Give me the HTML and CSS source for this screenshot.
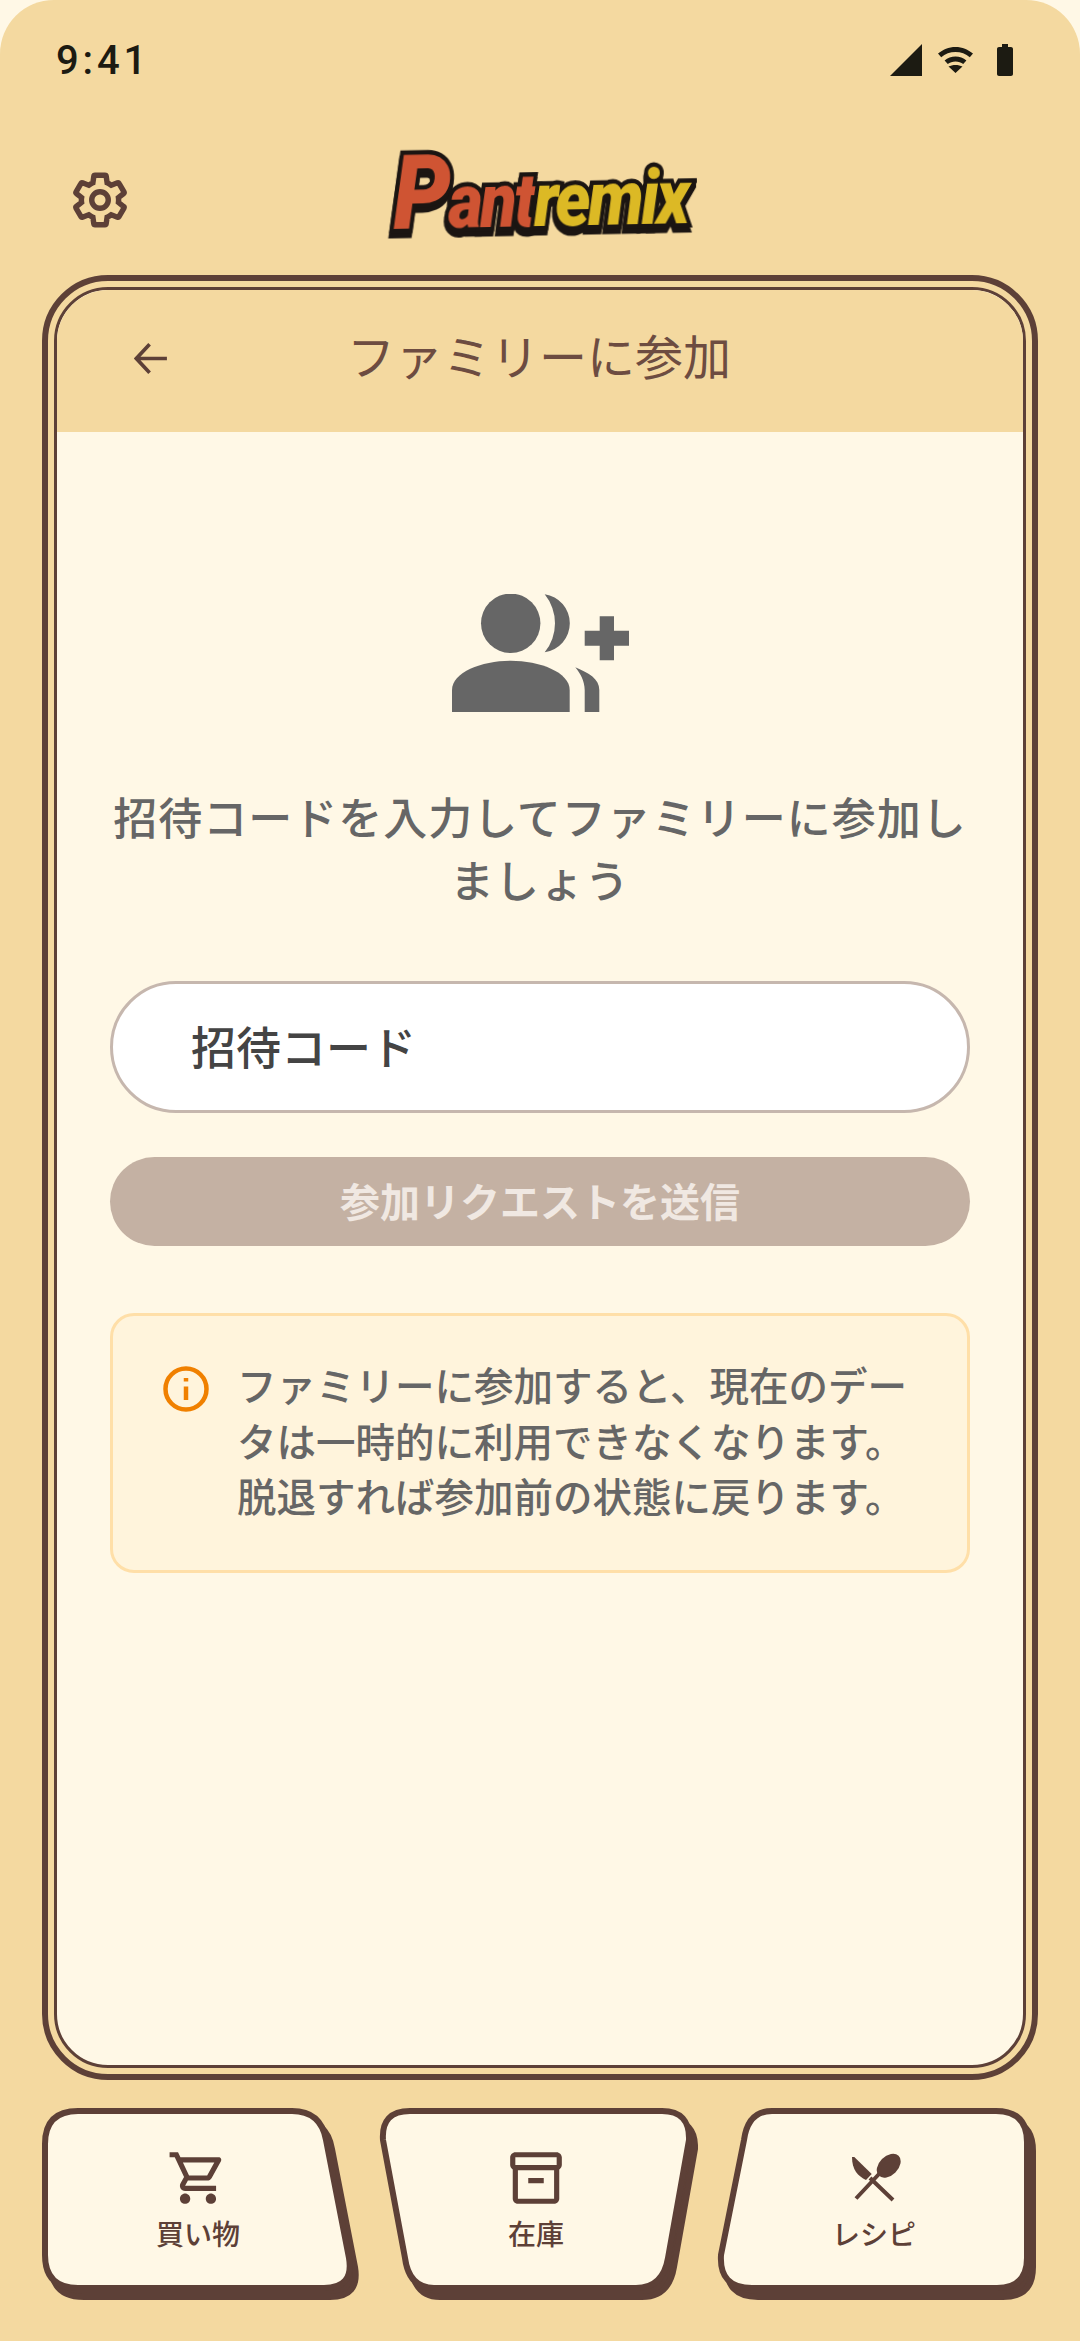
FILE: index.html
```html
<!DOCTYPE html>
<html lang="ja">
<head>
  <meta charset="UTF-8" />
  <meta name="viewport" content="width=device-width, initial-scale=1.0" />
  <title>ファミリーに参加</title>
  <link rel="stylesheet" href="styles.css">
</head>
<body>
  <div class="screen">
    <div class="status-bar">
      <span class="clock">9:41</span>
      <div class="status-icons">
        <svg class="icon-signal" viewBox="0 0 32 32"><path d="M32 0V32H0Z"/></svg>
        <svg class="icon-wifi" viewBox="0 0 35 26"><path d="M17.5 0C10.8 0 4.8 2.6 0 6.6l3.2 3.6c3.9-3.3 8.9-5.2 14.3-5.2s10.400 1.900 14.300 5.200L35 6.600C30.200 2.600 24.200 0 17.500 0zM17.500 9.500c-4.100 0-7.900 1.500-10.900 4l3.200 3.600c2-1.700 4.700-2.700 7.700-2.700s5.700 1 7.700 2.700l3.200-3.600c-3-2.500-6.800-4-10.900-4zM10.500 19.500l7 6.500 7-6.500c-2-1-4.500-1.600-7-1.600s-5 .6-7 1.600z"/></svg>
        <svg class="icon-battery" viewBox="0 0 16 32"><path d="M5 0H11V3H14C15.100 3 16 3.900 16 5V30C16 31.100 15.100 32 14 32H2C.9 32 0 31.100 0 30V5C0 3.900 .9 3 2 3H5Z"/></svg>
      </div>
    </div>

    <header class="app-bar">
      <button class="settings-btn" type="button">
        <svg viewBox="0 0 24 24"><path d="M19.140 12.940c.04-.3.06-.61.06-.94 0-.32-.02-.64-.07-.94l2.030-1.580c.18-.14.23-.41.12-.61l-1.920-3.320c-.12-.22-.37-.29-.59-.22l-2.390.96c-.5-.38-1.030-.7-1.620-.94l-.36-2.540c-.04-.24-.24-.41-.48-.41h-3.840c-.24 0-.43.17-.47.41l-.36 2.540c-.59.24-1.130.57-1.620.94l-2.390-.96c-.22-.08-.47 0-.59.22L2.740 8.870c-.12.21-.08.47.12.61l2.030 1.580c-.05.3-.09.63-.09.94s.02.64.07.94l-2.030 1.580c-.18.14-.23.41-.12.61l1.920 3.320c.12.22.37.29.59.22l2.390-.96c.5.38 1.030.7 1.620.94l.36 2.540c.05.24.24.41.48.41h3.840c.24 0 .44-.17.47-.41l.36-2.540c.59-.24 1.130-.56 1.620-.94l2.390.96c.22.08.47 0 .59-.22l1.920-3.320c.12-.22.07-.47-.12-.61l-2.010-1.580zM12 15.200c-1.760 0-3.200-1.440-3.200-3.200s1.440-3.200 3.200-3.200 3.200 1.440 3.200 3.200-1.440 3.200-3.200 3.200z"/></svg>
      </button>
      <div class="logo"><span class="logo-cap">P</span><span class="logo-red">ant</span><span class="logo-yellow">remix</span></div>
    </header>

    <main class="panel">
      <div class="panel-inner">
        <div class="panel-head">
          <svg class="back-arrow" viewBox="0 0 36 34"><path d="M36 17H3M17 1.500L2.500 17 17 32.500"/></svg>
          <h1>ファミリーに参加</h1>
        </div>

        <div class="panel-body">
          <svg class="join-icon" viewBox="0 0 177 118">
            <circle cx="58.700" cy="29.300" r="29.700"/>
            <path d="M92.700.3A29.300 29.300 0 0 1 92.700 58.300 46 46 0 0 0 92.700.3Z"/>
            <path d="M0 118V96C0 78 30 66.700 58.700 66.700S117.700 78 117.700 96V118Z"/>
            <path d="M132.700 118V96C132.700 87 128 79 123.300 73.300 137 79 147.300 85 147.300 96V118Z"/>
            <path d="M147.700 22.300H162V36.700H177V51.700H162V66.300H147.700V51.700H132.700V36.700H147.700Z"/>
          </svg>
          <p class="lead">招待コードを入力してファミリーに参加しましょう</p>

          <div class="code-input">招待コード</div>
          <button class="submit-btn" type="button" disabled>参加リクエストを送信</button>

          <div class="notice">
            <svg class="notice-icon" viewBox="0 0 46 46">
              <circle cx="23" cy="23" r="20.500"/>
              <path d="M23 20.500V34M23 12V15.500"/>
            </svg>
            <p>ファミリーに参加すると、現在のデータは一時的に利用できなくなります。脱退すれば参加前の状態に戻ります。</p>
          </div>
        </div>
      </div>
    </main>

    <nav class="tabs">
      <a class="tab tab-shop">
        <svg class="tab-shape" viewBox="0 0 318 192">
          <path class="tab-shadow" d="M36 3H250Q279 3 284 32L307 150Q312 180 282 180H36Q3 180 3 147V36Q3 3 36 3Z"/>
          <path class="tab-face" d="M36 3H250Q279 3 284 32L307 150Q312 180 282 180H36Q3 180 3 147V36Q3 3 36 3Z"/>
        </svg>
        <svg class="tab-icon" viewBox="0 0 24 24"><path d="M15.550 13c.75 0 1.410-.41 1.750-1.030l3.580-6.490c.37-.66-.11-1.480-.87-1.480H5.210l-.94-2H1v2h2l3.600 7.590-1.350 2.440C4.520 15.370 5.480 17 7 17h12v-2H7l1.100-2h7.450zM6.160 6h12.150l-2.760 5H8.530L6.160 6zM7 18c-1.100 0-1.990.9-1.990 2S5.900 22 7 22s2-.9 2-2-.9-2-2-2zm10 0c-1.100 0-1.990.9-1.990 2s.89 2 1.990 2 2-.9 2-2-.9-2-2-2z"/></svg>
        <span>買い物</span>
      </a>
      <a class="tab tab-stock">
        <svg class="tab-shape" viewBox="0 0 324 192">
          <path class="tab-shadow" d="M36 3H288Q316 3 315 32L294 150Q289 180 262 180H60Q35 180 31 150L9 32Q7 3 36 3Z"/>
          <path class="tab-face" d="M36 3H288Q316 3 315 32L294 150Q289 180 262 180H60Q35 180 31 150L9 32Q7 3 36 3Z"/>
        </svg>
        <svg class="tab-icon" viewBox="0 0 24 24"><path d="M20 2H4c-1 0-2 .9-2 2v3.010c0 .72.43 1.340 1 1.690V20c0 1.100 1.100 2 2 2h14c.9 0 2-.9 2-2V8.700c.57-.35 1-.97 1-1.690V4c0-1.100-1-2-2-2zm-1 18H5V9h14v11zm1-13H4V4h16v3zM9 12h6v2H9z"/></svg>
        <span>在庫</span>
      </a>
      <a class="tab tab-recipe">
        <svg class="tab-shape" viewBox="0 0 324 192">
          <path class="tab-shadow" d="M60 3H284Q315 3 315 34V150Q315 180 285 180H40Q7 180 9 147L32 32Q36 3 60 3Z"/>
          <path class="tab-face" d="M60 3H284Q315 3 315 34V150Q315 180 285 180H40Q7 180 9 147L32 32Q36 3 60 3Z"/>
        </svg>
        <svg class="tab-icon" viewBox="0 0 62 62">
          <path d="M9 10H11.300L28.700 27 23 33C15 29 9 23 9 10Z"/>
          <ellipse cx="45.700" cy="18.700" rx="14" ry="9.500" transform="rotate(-45 45.700 18.700)"/>
          <path class="cutlery-line" d="M27 31L50 53M36 27L13 51.500"/>
        </svg>
        <span>レシピ</span>
      </a>
    </nav>
  </div>
</body>
</html>
```

FILE: styles.css
```css
* {
  box-sizing: border-box;
}
html {
  background: #fff8e6;
}
body {
  margin: 0;
  width: 1080px;
  height: 2341px;
  overflow: hidden;
  font-family: "Noto Sans CJK JP", "Noto Sans", sans-serif;
}
.screen {
  height: 2341px;
  display: flex;
  flex-direction: column;
  background: #f4d9a0;
  border-radius: 54px 54px 0 0;
}

/* status bar */
.status-bar {
  height: 120px;
  padding: 0 67px 0 56px;
  display: flex;
  justify-content: space-between;
  align-items: center;
}
.clock {
  font-family: Roboto, sans-serif;
  font-weight: 500;
  font-size: 40px;
  letter-spacing: 3.800px;
  color: #1c1b12;
}
.status-icons {
  display: flex;
  align-items: center;
  gap: 16px;
  fill: #1c1b12;
}
.icon-signal {
  width: 32px;
  height: 32px;
}
.icon-wifi {
  width: 35px;
  height: 26px;
}
.icon-battery {
  width: 16px;
  height: 32px;
  margin-left: 8px;
}

/* logo row */
.app-bar {
  height: 155px;
  position: relative;
  display: flex;
  align-items: center;
  justify-content: center;
}
.settings-btn {
  position: absolute;
  left: 69px;
  top: 49px;
  width: 62px;
  height: 62px;
  padding: 0;
  border: none;
  background: none;
}
.settings-btn svg {
  display: block;
  fill: none;
  stroke: #5d4037;
  stroke-width: 2.100;
}
.logo {
  margin-top: -14px;
  white-space: nowrap;
  font-family: Roboto, sans-serif;
  font-style: italic;
  font-weight: 900;
  font-size: 76px;
  line-height: 1;
  letter-spacing: -3px;
  -webkit-text-stroke: 9px #1b1512;
  paint-order: stroke fill;
  filter: drop-shadow(-1px 5px 0 #1b1512);
  transform: scaleX(0.88) rotate(-1deg);
}
.logo-cap {
  font-size: 104px;
  color: #cf5433;
}
.logo-red {
  color: #cf5433;
}
.logo-yellow {
  color: #dcb925;
}

/* main panel with its double outline */
.panel {
  height: 1805px;
  margin: 0 42px;
  padding: 6px;
  border: 6px solid #5d4037;
  border-radius: 66px;
}
.panel-inner {
  height: 100%;
  border: 3px solid #5d4037;
  border-radius: 54px;
  overflow: hidden;
  background: #fff8e6;
}
.panel-head {
  height: 142px;
  padding: 0 2px 14px 0;
  position: relative;
  display: flex;
  align-items: center;
  justify-content: center;
  background: #f4d9a0;
}
.back-arrow {
  position: absolute;
  left: 77px;
  top: 53px;
  width: 33px;
  height: 31px;
  fill: none;
  stroke: #5d4037;
  stroke-width: 4;
}
.panel-head h1 {
  margin: 0;
  font-size: 48px;
  font-weight: 400;
  color: #6d4c41;
}
.panel-body {
  padding: 0 53px;
  display: flex;
  flex-direction: column;
  align-items: center;
}
.join-icon {
  width: 177px;
  height: 118px;
  margin-top: 162px;
  fill: #666666;
}
.lead {
  margin: 73px 0 0 0;
  width: 860px;
  font-size: 44px;
  font-weight: 500;
  line-height: 63px;
  letter-spacing: 1px;
  text-align: center;
  color: #666666;
}
.code-input {
  width: 860px;
  height: 132px;
  margin-top: 70px;
  padding: 0 0 4px 78px;
  display: flex;
  align-items: center;
  background: #ffffff;
  border: 3px solid #c6b7ae;
  border-radius: 66px;
  font-size: 45px;
  font-weight: 500;
  color: #444444;
}
.submit-btn {
  width: 860px;
  height: 89px;
  margin-top: 44px;
  padding: 0 0 4px 0;
  border: none;
  border-radius: 45px;
  background: #c4b1a3;
  font-family: inherit;
  font-weight: 700;
  font-size: 40px;
  color: #f0e8e2;
}
.notice {
  width: 860px;
  height: 260px;
  margin-top: 67px;
  padding: 45px 50px 0 50px;
  display: flex;
  gap: 28px;
  background: #fff4dc;
  border: 3px solid #ffdfa8;
  border-radius: 24px;
}
.notice-icon {
  flex: none;
  width: 46px;
  height: 46px;
  margin-top: 5px;
  fill: none;
  stroke: #f08000;
  stroke-width: 4.500;
}
.notice p {
  margin: -5px 0 0 0;
  font-size: 39.500px;
  font-weight: 500;
  line-height: 55.500px;
  color: #666666;
}

/* bottom navigation */
.tabs {
  margin-top: 28px;
  padding-left: 42px;
  display: flex;
  gap: 14px;
}
.tab {
  position: relative;
  height: 192px;
  padding-top: 39px;
  display: flex;
  flex-direction: column;
  align-items: center;
  font-size: 28px;
  font-weight: 500;
  line-height: 36px;
  color: #5d4037;
}
.tab-shop {
  width: 318px;
  padding-right: 6px;
}
.tab-stock,
.tab-recipe {
  width: 324px;
}
.tab-shape {
  position: absolute;
  left: 0;
  top: 0;
  width: 100%;
  height: 100%;
}
.tab-shadow {
  fill: #5d4037;
  stroke: #5d4037;
  stroke-width: 6;
  transform: translate(6px, 9px);
}
.tab-face {
  fill: #fff8e6;
  stroke: #5d4037;
  stroke-width: 6;
}
.tab-icon {
  position: relative;
  width: 62px;
  height: 62px;
  fill: #5d4037;
}
.cutlery-line {
  fill: none;
  stroke: #5d4037;
  stroke-width: 4;
}
.tab span {
  position: relative;
  margin-top: 6px;
}
```
